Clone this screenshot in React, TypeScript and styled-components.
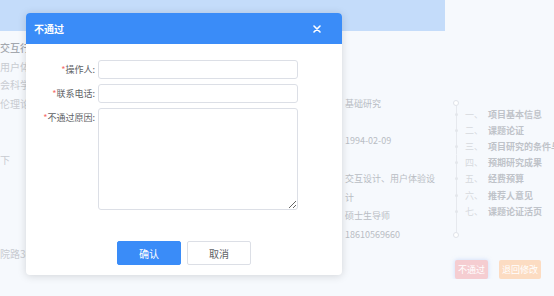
import React from 'react';
import styled, { createGlobalStyle } from 'styled-components';

const colors = {
  page: '#f6f9fd',
  band: '#c4dcfa',
  primary: '#3a8cf8',
  border: '#dcdfe6',
  label: '#606266',
  required: '#f56c6c',
  faint: '#c8cbd1',
  faintStrong: '#a3a7ae',
  value: '#b9bdc4',
  rail: '#e6e9ee',
};

const GlobalStyle = createGlobalStyle`
  html, body {
    margin: 0;
    padding: 0;
    background: ${colors.page};
  }
  body {
    font-family: "Noto Sans CJK SC", "Noto Sans", sans-serif;
  }
`;

const Page = styled.div`
  position: relative;
  width: 554px;
  height: 296px;
  overflow: hidden;
  background: ${colors.page};
`;

const TopBand = styled.div`
  width: 445px;
  height: 31px;
  background: ${colors.band};
`;

const Main = styled.div`
  display: flex;
  padding-top: 8px;
`;

/* only the left edge of this column shows beside the dialog */
const LeftCol = styled.div`
  flex: none;
  width: 30px;
  margin-right: 315px;
  overflow: hidden;
`;

const Line = styled.div<{ $strong?: boolean }>`
  height: 18.7px;
  line-height: 18.7px;
  font-size: 10px;
  white-space: nowrap;
  color: ${(p) => (p.$strong ? colors.faintStrong : colors.faint)};
  font-weight: ${(p) => (p.$strong ? 500 : 400)};
`;

const MidCol = styled.div`
  flex: none;
  width: 92px;
`;

const MidLine = styled.div`
  min-height: 18.7px;
  line-height: 18.7px;
  font-size: 9px;
  color: ${colors.value};
`;

const RightCol = styled.div`
  flex: 1;
  min-width: 0;
  padding-left: 16px;
  padding-top: 61px;
  overflow: hidden;
`;

const Timeline = styled.div`
  display: flex;
  flex-direction: column;
`;

const Circle = styled.div`
  width: 4px;
  height: 4px;
  border: 1px solid #dfe3e9;
  border-radius: 50%;
  background: #fff;
`;

const Rail = styled.div<{ $h?: number }>`
  flex: none;
  width: 6px;
  align-self: stretch;
  height: ${(p) => (p.$h ? `${p.$h}px` : 'auto')};
  display: flex;
  align-items: center;
  justify-content: center;
  background: linear-gradient(${colors.rail}, ${colors.rail}) center / 1px 100% no-repeat;
`;

const Dot = styled.span`
  width: 3px;
  height: 3px;
  border-radius: 50%;
  background: #e3e6eb;
`;

const Item = styled.div`
  display: flex;
  align-items: center;
  height: 16.2px;
  font-size: 9px;
  white-space: nowrap;
`;

const ItemNo = styled.span`
  flex: none;
  display: inline-block;
  width: 23px;
  margin-left: 6px;
  color: #d6d9de;
`;

const ItemText = styled.span`
  color: #bfc3c9;
  font-weight: 600;
`;

const Actions = styled.div`
  display: flex;
  gap: 11px;
  margin-top: 22px;
  padding-left: 2px;
`;

const ActionButton = styled.span<{ $tone: 'pink' | 'orange' }>`
  height: 19px;
  line-height: 19px;
  padding: 0 3px;
  font-size: 9px;
  color: #fff;
  border-radius: 2px;
  background: ${(p) => (p.$tone === 'pink' ? '#f5cdd1' : '#fcdcc2')};
  box-shadow: ${(p) => (p.$tone === 'pink' ? '0 0 4px rgba(160, 190, 250, 0.5)' : 'none')};
`;

const Modal = styled.div`
  position: absolute;
  left: 26px;
  top: 13px;
  width: 316px;
  background: #fff;
  border-radius: 4px;
  box-shadow: 0 1px 8px rgba(0, 0, 0, 0.15);
  overflow: hidden;
`;

const ModalHeader = styled.div`
  height: 31px;
  display: flex;
  align-items: center;
  justify-content: space-between;
  padding: 0 21px 0 8px;
  background: ${colors.primary};
  color: #fff;
`;

const Title = styled.span`
  font-size: 10px;
  font-weight: 700;
`;

const CloseIcon = styled.svg`
  width: 8px;
  height: 8px;
`;

const Form = styled.div`
  display: grid;
  grid-template-columns: 69px 200px;
  column-gap: 3px;
  row-gap: 5px;
  padding-top: 16px;
`;

const Label = styled.label`
  text-align: right;
  font-size: 9px;
  line-height: 19px;
  color: ${colors.label};
  white-space: nowrap;
`;

const Star = styled.span`
  color: ${colors.required};
`;

const Input = styled.input`
  box-sizing: border-box;
  width: 200px;
  height: 19px;
  margin: 0;
  border: 1px solid ${colors.border};
  border-radius: 3px;
  background: #fff;
  outline: none;
`;

const TextArea = styled.textarea`
  box-sizing: border-box;
  width: 200px;
  height: 102px;
  margin: 0;
  border: 1px solid ${colors.border};
  border-radius: 3px;
  background: #fff;
  outline: none;
  display: block;
`;

const Footer = styled.div`
  display: flex;
  justify-content: center;
  gap: 6px;
  padding: 31px 0 10px;
`;

const Button = styled.button<{ $primary?: boolean }>`
  box-sizing: border-box;
  width: 64px;
  height: 24px;
  padding: 0;
  font-family: inherit;
  font-size: 10px;
  border-radius: 2px;
  border: 1px solid ${(p) => (p.$primary ? colors.primary : colors.border)};
  background: ${(p) => (p.$primary ? colors.primary : '#fff')};
  color: ${(p) => (p.$primary ? '#fff' : '#606266')};
`;

const leftLines = ['交互行', '用户体', '会科学', '伦理论', '', '', '下', '', '', '', '', '院路30'];
const midLines = ['', '', '', '基础研究', '', '1994-02-09', '', '交互设计、用户体验设计', '硕士生导师', '18610569660'];
const items = [
  ['一、', '项目基本信息'],
  ['二、', '课题论证'],
  ['三、', '项目研究的条件与保障'],
  ['四、', '预期研究成果'],
  ['五、', '经费预算'],
  ['六、', '推荐人意见'],
  ['七、', '课题论证活页'],
];

const App: React.FC = () => {
  return (
    <Page>
      <GlobalStyle />
      <TopBand />
      <Main>
        <LeftCol>
          {leftLines.map((t, i) => (
            <Line key={i} $strong={i === 0}>{t}</Line>
          ))}
        </LeftCol>
        <MidCol>
          {midLines.map((t, i) => (
            <MidLine key={i}>{t}</MidLine>
          ))}
        </MidCol>
        <RightCol>
          <Timeline>
            <Circle />
            {items.map(([no, text]) => (
              <Item key={no}>
                <Rail>
                  <Dot />
                </Rail>
                <ItemNo>{no}</ItemNo>
                <ItemText>{text}</ItemText>
              </Item>
            ))}
            <Rail $h={13} />
            <Circle />
          </Timeline>
          <Actions>
            <ActionButton $tone="pink">不通过</ActionButton>
            <ActionButton $tone="orange">退回修改</ActionButton>
          </Actions>
        </RightCol>
      </Main>

      <Modal>
        <ModalHeader>
          <Title>不通过</Title>
          <CloseIcon viewBox="0 0 8 8">
            <path d="M1 1L7 7M7 1L1 7" stroke="#fff" strokeWidth="1.6" strokeLinecap="round" />
          </CloseIcon>
        </ModalHeader>
        <Form>
          <Label><Star>*</Star>操作人:</Label>
          <Input />
          <Label><Star>*</Star>联系电话:</Label>
          <Input />
          <Label><Star>*</Star>不通过原因:</Label>
          <TextArea />
        </Form>
        <Footer>
          <Button $primary>确认</Button>
          <Button>取消</Button>
        </Footer>
      </Modal>
    </Page>
  );
};

export default App;
